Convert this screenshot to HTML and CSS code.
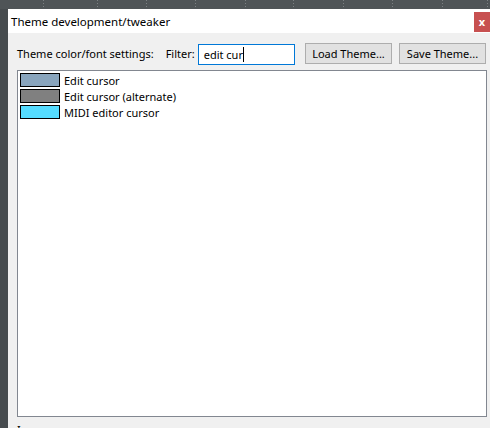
FILE: index.html
```html
<!DOCTYPE html>
<html>
<head>
<meta charset="utf-8">
<link rel="stylesheet" href="styles.css">
</head>
<body>
<div class="desk">
  <div class="topstrip">
    <span class="tick" style="left:43px"></span>
    <span class="tick" style="left:97px"></span>
    <span class="tick" style="left:146px"></span>
    <span class="tick" style="left:195px"></span>
    <span class="tick" style="left:245px"></span>
    <span class="tick" style="left:293px"></span>
    <span class="tick" style="left:343px"></span>
    <span class="tick" style="left:392px"></span>
    <span class="tick" style="left:442px"></span>
    <span class="tick" style="left:487px"></span>
  </div>
  <div class="row-main">
    <div class="leftstrip"></div>
    <div class="window">
      <div class="titlebar">
        <span class="title">Theme development/tweaker</span>
        <span class="close">x</span>
      </div>
      <div class="body">
        <div class="toolbar">
          <span class="lbl">Theme color/font settings:</span>
          <span class="lbl filter">Filter:</span>
          <div class="input">edit cur<span class="caret"></span></div>
          <button class="btn load">Load Theme...</button>
          <button class="btn save">Save Theme...</button>
        </div>
        <div class="list">
          <div class="item"><span class="sw" style="background:#89a5bd"></span><span>Edit cursor</span></div>
          <div class="item"><span class="sw" style="background:#808080"></span><span>Edit cursor (alternate)</span></div>
          <div class="item"><span class="sw" style="background:#55dcff"></span><span>MIDI editor cursor</span></div>
        </div>
        <div class="section">Image resources</div>
      </div>
    </div>
  </div>
</div>
</body>
</html>
```
FILE: styles.css
```css
* { box-sizing: border-box; }
html, body { margin: 0; padding: 0; }
body {
  width: 490px; height: 428px; overflow: hidden;
  background: #4a4f52;
  font-family: "Noto Sans", "Open Sans", sans-serif;
  font-size: 11px;
  color: #000;
}
.desk { display: flex; flex-direction: column; width: 490px; height: 428px; }
.topstrip { position: relative; height: 9px; background: #4f5457; flex: none; }
.tick { position: absolute; top: 0; width: 1px; height: 9px;
  background: repeating-linear-gradient(#7c8083 0 1px, transparent 1px 3px); }
.row-main { display: flex; flex: 1; min-height: 0; }
.leftstrip { width: 8px; background: #464b4e; flex: none; }
.window { flex: 1; display: flex; flex-direction: column; background: #f0f0f0; min-width: 0; }
.titlebar { height: 24px; background: #fff; display: flex; align-items: center; justify-content: space-between; flex: none; }
.title { padding-left: 3px; font-size: 11.5px; }
.close { width: 16px; height: 20px; margin-top: 2px; background: #c75050; color: #fff; font-weight: bold;
  display: flex; align-items: center; justify-content: center; font-size: 11px; line-height: 1; padding-bottom: 2px; }
.body { flex: 1; display: flex; flex-direction: column; padding: 10px 4px 0 9px; min-height: 0; }
.toolbar { display: flex; align-items: center; height: 21px; width: 469px; }
.lbl { white-space: nowrap; }
.filter { margin-left: 12px; }
.input { width: 97px; height: 21px; margin-left: 3px; margin-top: 2px; border: 1px solid #0078d7; background: #fff;
  padding: 0 0 0 5px; display: flex; align-items: center; }
.caret { display: inline-block; width: 1px; height: 15px; background: #000; }
.btn { font: inherit; height: 21px; border: 1px solid #adadad; background: #e1e1e1; padding: 0;
  width: 87px; color: #000; flex: none; }
.save { margin-left: 7px; }
.load { margin-left: auto; }
.list { margin-top: 6px; height: 347px; width: 470px; border: 1px solid #828790; background: #fff; padding: 1px 0 0 2px; flex: none; }
.item { display: flex; align-items: center; height: 16px; }
.sw { width: 40px; height: 14px; border: 1px solid #000; margin-right: 4px; flex: none; }
.section { margin-top: 5px; }
```
